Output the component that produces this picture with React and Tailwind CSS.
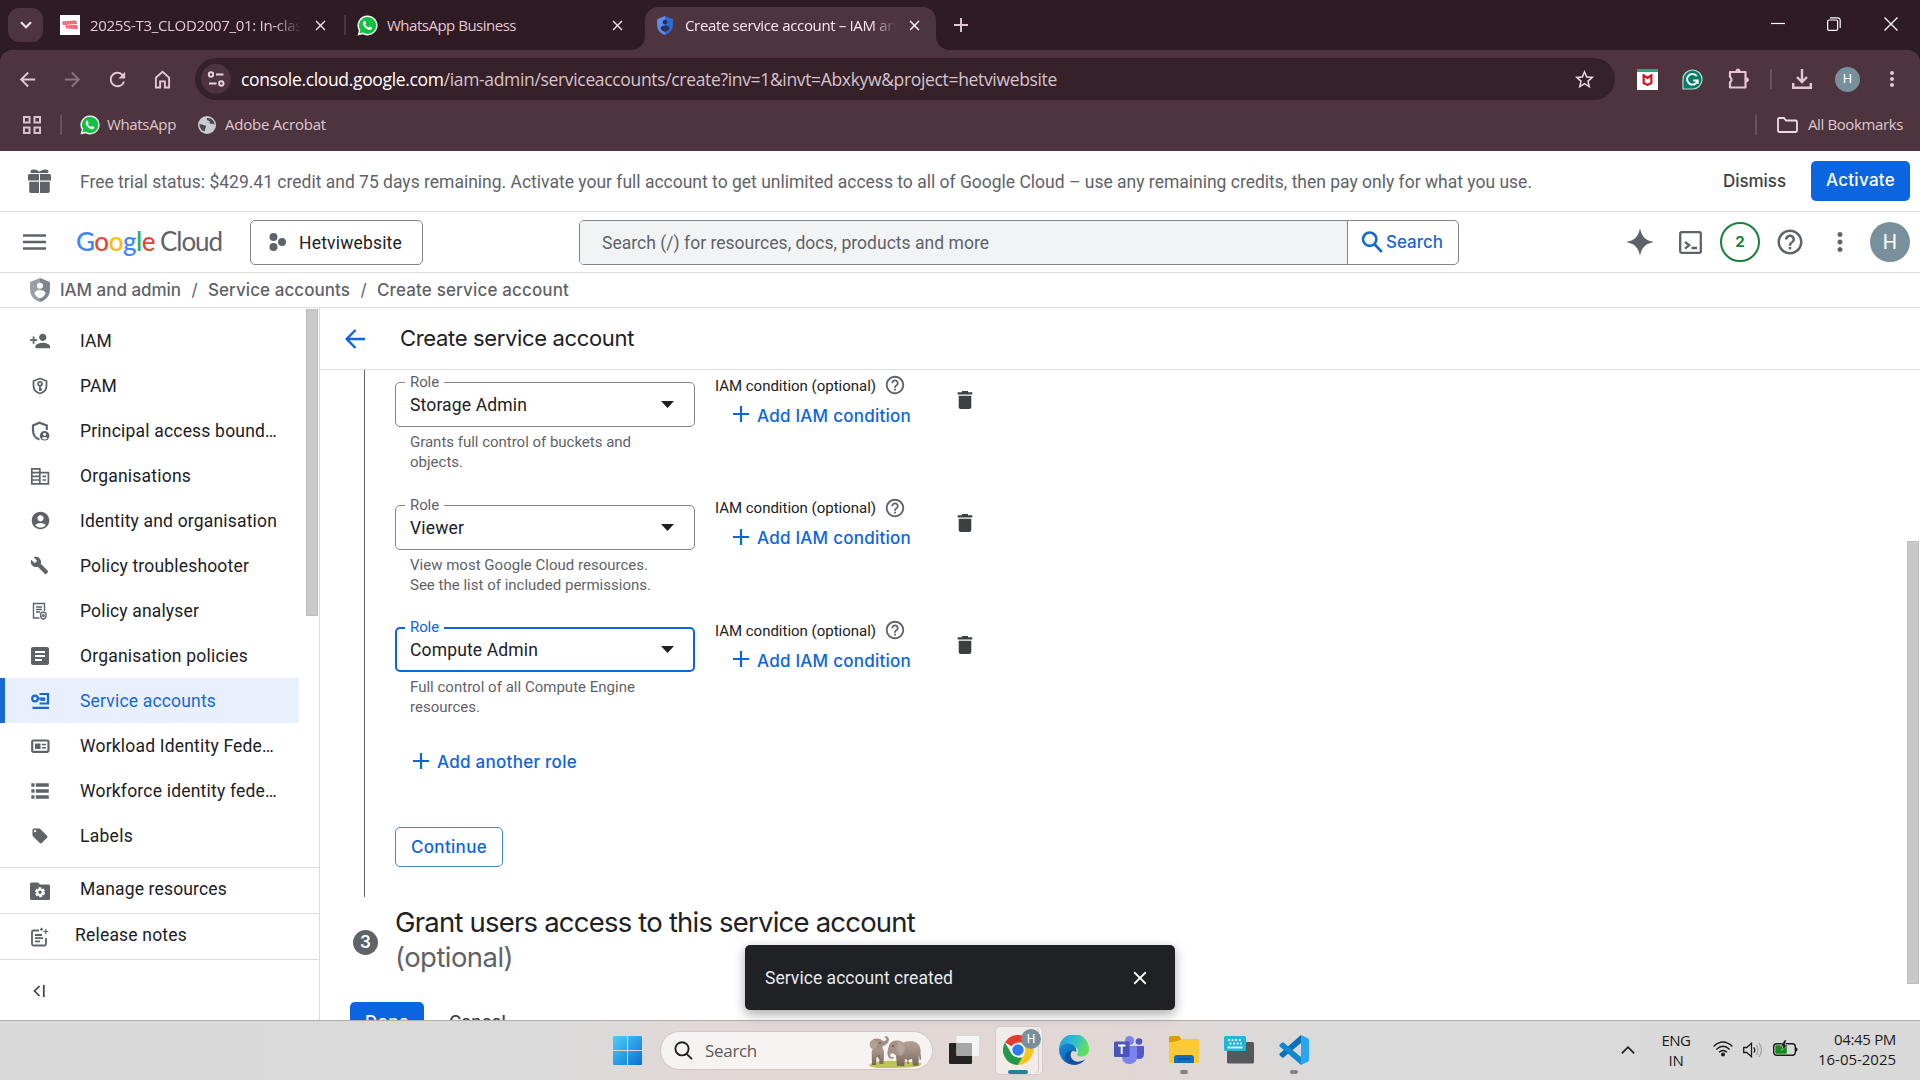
import React, { useLayoutEffect, useRef } from "react";
import {
  MdPersonAdd, MdAccountCircle, MdBuild, MdArticle, MdLocalOffer, MdHelpOutline,
  MdArrowBack, MdArrowForward, MdRefresh, MdClose, MdMoreVert, MdStarBorder,
} from "react-icons/md";

const UI = "font-['Open_Sans','Noto_Sans',sans-serif]";
const RB = "font-[Roboto,sans-serif]";
const GS = "font-[Inter,Roboto,sans-serif]";

/* Text whose tracking is adjusted so that it spans exactly `w` pixels. */
function Fit({ w, className = "", children }) {
  const ref = useRef(null);
  useLayoutEffect(() => {
    const el = ref.current;
    el.style.letterSpacing = "0px";
    const natural = el.getBoundingClientRect().width;
    el.style.letterSpacing = `${(w - natural) / el.textContent.length}px`;
  }, [w, children]);
  return (
    <span ref={ref} className={`inline-block shrink-0 whitespace-pre ${className}`}>
      {children}
    </span>
  );
}

function WhatsApp({ className }) {
  return (
    <svg viewBox="0 0 24 24" className={className}>
      <path d="M12 .5A11.4 11.4 0 0 0 2.2 17.7L.6 23.5l6-1.6A11.4 11.4 0 1 0 12 .5z" fill="#fff" />
      <path d="M12 2.2a9.7 9.7 0 0 0-8.2 14.9l-1 3.9 4.1-1A9.7 9.7 0 1 0 12 2.2z" fill="#12c143" />
      <path d="M8.7 6.6c.4 0 .6.1.8.6l.8 2c.1.3 0 .5-.9 1.6.8 1.6 2.1 2.9 3.9 3.6.9-1 1.1-1.3 1.5-1.1l2 1c.4.2.4.4.3.9-.3 1.3-1.5 1.9-2.5 1.9-1.3 0-4.2-1.200-6-3.600C7.500 12.300 7 11.200 6.900 9.900c0-1.500.8-3.300 1.800-3.300z" fill="#fff" />
    </svg>
  );
}

function Bars() {
  return (
    <svg viewBox="0 0 20 20" className="w-5 h-5" fill="none" stroke="#e8d3da" strokeWidth="1.9">
      <circle cx="5" cy="5.500" r="2.200" /><path d="M10 5.500h7.500M3 14.500h7.500" /><circle cx="15.300" cy="14.500" r="2.200" />
    </svg>
  );
}

function Shield({ className, a, b, hole }) {
  return (
    <svg viewBox="0 0 20 24" className={className}>
      <path d="M10 0L0 4v7.500C0 17.500 4.300 22.500 10 24z" fill={a} />
      <path d="M10 0l10 4v7.500C20 17.500 15.700 22.500 10 24z" fill={b} />
      <circle cx="10" cy="7.800" r="3" fill={hole} />
      <path d="M10 12c3.400 0 5.500 1.700 5.500 3.400C14.500 18 12 20 10 20s-4.500-2-5.500-4.600C4.500 13.700 6.600 12 10 12z" fill={hole} />
    </svg>
  );
}

function TabStrip() {
  return (
    <div className="flex h-[50px] items-start text-[#e6c6d1]">
      <div className="mt-2 ml-2 flex h-[34px] w-[35px] items-center justify-center rounded-[11px] bg-[#4d343e]">
        <svg viewBox="0 0 12 8" className="h-2 w-3" fill="none" stroke="#f0dfe5" strokeWidth="2.200"><path d="M1 1.200l5 5 5-5" /></svg>
      </div>
      <div className="flex h-[50px] w-[301px] items-center pl-[17px]">
        <svg viewBox="0 0 20 20" className="h-5 w-5">
          <path d="M0 0h20v20H0z" fill="#fff" />
          <path d="M2 6.500l14-1 1 3.500-14 1zM5 10.500l12-.5.500 4-11-.5z" fill="#f2566b" />
          <path d="M3.500 8h12M7 12.200h9" stroke="#fbd0d6" strokeWidth=".8" strokeDasharray="1.500 1" />
        </svg>
        <div className={`${UI} mb-px ml-[10px] w-[211px] overflow-hidden text-[15px] leading-5 [mask-image:linear-gradient(90deg,#000_185px,transparent_211px)]`}>
          <Fit w={212}>2025S-T3_CLOD2007_01: In-clas</Fit>
        </div>
        <MdClose className="ml-[11px] h-[17px] w-[17px] shrink-0 text-[#f0dfe5]" />
      </div>
      <div className="mt-[15px] h-5 w-[2px] bg-[#4d343e]" />
      <div className="flex h-[50px] w-[285px] items-center pl-[11px]">
        <WhatsApp className="h-[21px] w-[21px]" />
        <Fit w={129} className={`${UI} mb-px ml-[9px] text-[15px] leading-5`}>WhatsApp Business</Fit>
        <MdClose className="ml-[93px] h-[17px] w-[17px] shrink-0 text-[#f0dfe5]" />
      </div>
      <div className="flex h-[50px] w-[16px] items-end">
        <svg viewBox="0 0 14 14" className="h-[14px] w-[14px]" fill="#4d343e"><path d="M14 0v14H0A14 14 0 0 0 14 0z" /></svg>
      </div>
      <div className="mt-[7px] -ml-[2px] flex h-[43px] w-[291px] items-center rounded-t-[13px] bg-[#4d343e] pl-3 pb-[6px]">
        <Shield className="h-[19px] w-4" a="#5b8def" b="#3367d6" hole="#2f2f55" />
        <div className={`${UI} mb-px ml-3 w-[211px] overflow-hidden text-[15px] leading-5 text-[#fbe9ef] [mask-image:linear-gradient(90deg,#000_185px,transparent_211px)]`}>
          <Fit w={211}>Create service account – IAM an</Fit>
        </div>
        <MdClose className="ml-[10px] h-[17px] w-[17px] shrink-0 text-white" />
      </div>
      <div className="flex h-[50px] w-[16px] items-end">
        <svg viewBox="0 0 14 14" className="h-[14px] w-[14px]" fill="#4d343e"><path d="M0 0v14h14A14 14 0 0 1 0 0z" /></svg>
      </div>
      <svg viewBox="0 0 14 14" className="mt-[18px] ml-[2px] h-[14px] w-[14px]" stroke="#e6c6d1" strokeWidth="1.900"><path d="M7 0v14M0 7h14" /></svg>
      <div className="mt-[17px] mr-[22px] ml-auto flex items-center text-white">
        <svg viewBox="0 0 14 14" className="h-[14px] w-[14px]" stroke="#fff" strokeWidth="1.200"><path d="M0 6.500h14" /></svg>
        <svg viewBox="0 0 14 14" className="ml-[42px] h-[14px] w-[14px]" fill="none" stroke="#fff" strokeWidth="1.200"><rect x=".6" y="3" width="10" height="10.400" rx="1.500" /><path d="M3 .8h7.500a2.500 2.500 0 0 1 2.700 2.600V11" /></svg>
        <svg viewBox="0 0 14 14" className="ml-[43px] h-[14px] w-[14px]" stroke="#fff" strokeWidth="1.300"><path d="M.5.5l13 13M13.500.5l-13 13" /></svg>
      </div>
    </div>
  );
}

function Toolbar() {
  return (
    <div className="flex h-[58px] items-center text-[#e6c6d1]">
      <MdArrowBack className="ml-[16px] h-[23px] w-[23px]" />
      <MdArrowForward className="ml-[22px] h-[23px] w-[23px] text-[#8f737e]" />
      <MdRefresh className="ml-[22px] h-[23px] w-[23px]" />
      <svg viewBox="0 0 18 20" className="ml-[25px] h-[19px] w-[17px]" fill="none" stroke="#e6c6d1" strokeWidth="2"><path d="M2 8v10.500h4.500V12h5v6.500H16V8L9 1.800z" /></svg>
      <div className="ml-[24px] flex h-[42px] w-[1420px] items-center rounded-full bg-[#36212a] pl-[6px]">
        <div className="flex h-[30px] w-[30px] items-center justify-center rounded-full bg-[#4d343e]"><Bars /></div>
        <div className={`${UI} ml-[10px] text-[17.5px] leading-6 text-[#d5c3ca]`}>
          <Fit w={816}><span className="text-white">console.cloud.google.com</span>/iam-admin/serviceaccounts/create?inv=1&amp;invt=Abxkyw&amp;project=hetviwebsite</Fit>
        </div>
        <MdStarBorder className="ml-[516px] h-[23px] w-[23px] text-[#e8d8de]" />
      </div>
      <div className="ml-[22px] flex h-[21px] w-[21px] flex-col items-center border-t-[3px] border-[#2ea583] bg-white">
        <svg viewBox="0 0 12 14" className="mt-[2px] h-[12px] w-[11px]" fill="none" stroke="#d0121f" strokeWidth="2.500"><path d="M1.500 1.500v9L6 12.700l4.500-2.200v-9L6 4.500z" /></svg>
      </div>
      <svg viewBox="0 0 22 22" className="ml-[24px] h-[21px] w-[21px]">
        <path d="M11 1a10 10 0 0 1 0 20H1V11A10 10 0 0 1 11 1z" fill="#067d66" stroke="#b9ddd5" strokeWidth="1.200" />
        <path d="M15.500 7.500a5.600 5.600 0 1 0 .9 4.500h-4.500M16.500 15.500V12" fill="none" stroke="#fff" strokeWidth="2" />
      </svg>
      <svg viewBox="0 0 22 22" className="ml-[25px] h-[22px] w-[22px]" fill="none" stroke="#e6c6d1" strokeWidth="2.200" strokeLinejoin="round">
        <path d="M2 4h15.500v15.500H2v-5.200a3 3 0 0 0 0-5.200z" /><path d="M8 3a2 2 0 0 1 4 0zM18.500 9.800a2 2 0 0 1 0 4z" fill="#e6c6d1" strokeWidth="1" />
      </svg>
      <div className="ml-[20px] h-5 w-[2px] bg-[#6c5059]" />
      <svg viewBox="0 0 20 20" className="ml-[20px] h-[20px] w-[20px]" fill="none" stroke="#e6c6d1" strokeWidth="2.400"><path d="M10 0v12.500M5 8l5 5 5-5M1.200 14v4.800h17.600V14" /></svg>
      <div className={`${RB} ml-[23px] flex h-[25px] w-[25px] items-center justify-center rounded-full bg-[#78909c] text-[13px] text-white`}>H</div>
      <MdMoreVert className="ml-[20px] h-[24px] w-[24px]" />
    </div>
  );
}

function Bookmarks() {
  return (
    <div className={`${UI} flex h-[43px] items-start pt-[7px] text-[15px] leading-5 text-[#dfc8d0]`}>
      <svg viewBox="0 0 18 18" className="mt-[1px] ml-[23px] h-[18px] w-[18px]" fill="none" stroke="#d9c3cb" strokeWidth="2"><rect x="1" y="1" width="5.500" height="5.500" /><rect x="11.500" y="1" width="5.500" height="5.500" /><rect x="1" y="11.500" width="5.500" height="5.500" /><rect x="11.500" y="11.500" width="5.500" height="5.500" /></svg>
      <div className="ml-[19px] h-5 w-[2px] bg-[#6c5059]" />
      <WhatsApp className="ml-[18px] h-[20px] w-[20px]" />
      <Fit w={69} className="-mt-px ml-[7px]">WhatsApp</Fit>
      <svg viewBox="0 0 18 18" className="mt-px ml-[22px] h-[18px] w-[18px]"><circle cx="9" cy="9" r="9" fill="#c9cdd2" /><path d="M1.500 8c2 0 3.500 1 5 1.200 1.500.3 2 1.300 1 2.500-.6.800 0 2-1 3.800-3-.8-5.300-4-5-7.500zM9 2c-1 1.500.5 2.500 2 3s0 2 1 2.500 3-.5 4.500 1.500C17 5 13 1.500 9 2z" fill="#4d4a50" /></svg>
      <Fit w={101} className="-mt-px ml-[9px]">Adobe Acrobat</Fit>
      <div className="ml-auto h-5 w-[2px] bg-[#6c5059]" />
      <svg viewBox="0 0 21 16" className="mt-[2px] ml-[20px] h-[16px] w-[21px]" fill="none" stroke="#eadde2" strokeWidth="1.800"><path d="M1 2.500Q1 1 2.500 1H7l2 2.500h9.500Q20 3.500 20 5v8.500q0 1.500-1.500 1.500h-16Q1 15 1 13.500z" /></svg>
      <Fit w={95} className="-mt-px mr-[17px] ml-[10px]">All Bookmarks</Fit>
    </div>
  );
}

function Banner() {
  return (
    <div className="flex h-[61px] items-center border-b border-[#dadce0] bg-white">
      <svg viewBox="0 0 23 24" className="ml-[28px] h-6 w-[23px]" fill="#5f6368"><path d="M2.500 2.800C2.500 1 4 .2 6 .5c2.500.3 4 1.200 5.500 2.300C13 1.700 14.500.8 17 .5c2-.3 3.500.5 3.500 2.300 0 .8-.5 1.200-1 1.200h-16c-.5 0-1-.4-1-1.200zM1.500 5H11v6.500H0v-5Q0 5 1.500 5zM12 5h9.500Q23 5 23 6.500v5H12zM1.200 12.700H11V24H3q-1.800 0-1.800-1.800zM12 12.700h9.800v9.500Q21.800 24 20 24h-8z" /></svg>
      <Fit w={1452} className={`${RB} mt-[2px] ml-[29px] text-[17.5px] leading-6 text-[#5f6368]`}>Free trial status: $429.41 credit and 75 days remaining. Activate your full account to get unlimited access to all of Google Cloud – use any remaining credits, then pay only for what you use.</Fit>
      <Fit w={63} className={`${GS} ml-[191px] text-[17px] leading-6 font-medium text-[#3c4043]`}>Dismiss</Fit>
      <div className={`${GS} ml-[25px] flex h-10 w-[99px] items-center justify-center rounded-[5px] bg-[#0b65e0] text-[17px] font-medium text-white`}><Fit w={69}>Activate</Fit></div>
    </div>
  );
}

function Header() {
  return (
    <div className="flex h-[61px] items-center border-b border-[#dadce0] bg-white">
      <svg viewBox="0 0 23 16" className="ml-[23px] h-4 w-[23px]" stroke="#5f6368" strokeWidth="2.300"><path d="M0 1.500h23M0 8h23M0 14.500h23" /></svg>
      <Fit w={79} className="mb-[3px] ml-[30px] font-[Lato,sans-serif] text-[26px] leading-8 font-medium text-[#4285f4]">
        G<span className="text-[#ea4335]">o</span><span className="text-[#fbbc04]">o</span>g<span className="text-[#34a853]">l</span><span className="text-[#ea4335]">e</span>
      </Fit>
      <Fit w={62} className="mb-[3px] ml-[5px] font-[Lato,sans-serif] text-[26px] leading-8 text-[#5f6368]">Cloud</Fit>
      <div className="ml-[28px] flex h-[45px] w-[173px] items-center rounded-[5px] border border-[#80868b] pl-[18px]">
        <svg viewBox="0 0 17 18" className="h-[18px] w-[17px]" fill="#5f6368"><circle cx="4.500" cy="4" r="4" /><circle cx="4.500" cy="14" r="4" /><circle cx="13" cy="9" r="4" /></svg>
        <Fit w={103} className={`${RB} mt-px ml-[13px] text-[17.5px] leading-6 text-[#202124]`}>Hetviwebsite</Fit>
      </div>
      <div className="ml-[156px] flex h-[45px] w-[880px] overflow-hidden rounded-[5px] border border-[#80868b]">
        <div className="flex w-[768px] items-center border-r border-[#80868b] bg-[#f1f3f4] pl-[22px]">
          <Fit w={387} className={`${RB} mt-px text-[17.5px] leading-6 text-[#5f6368]`}>Search (/) for resources, docs, products and more</Fit>
        </div>
        <svg viewBox="0 0 22 22" className="mt-[10px] ml-[13px] h-[22px] w-[22px]" fill="none" stroke="#1967d2" strokeWidth="2.600"><circle cx="8.700" cy="8.200" r="6.700" /><path d="M13.300 13l7.500 8" /></svg>
        <Fit w={57} className={`${GS} mt-[9px] ml-[3px] text-[17px] leading-6 font-medium text-[#1967d2]`}>Search</Fit>
      </div>
      <svg viewBox="0 0 28 28" className="ml-[167px] h-7 w-7" fill="#5f6368"><path d="M14 0c1.500 8.500 5.500 12.500 14 14-8.500 1.500-12.500 5.500-14 14C12.500 19.500 8.500 15.500 0 14 8.500 12.500 12.500 8.500 14 0z" /></svg>
      <svg viewBox="0 0 23 23" className="ml-[25px] h-[23px] w-[23px]" fill="none" stroke="#5f6368" strokeWidth="2.300"><rect x="1.200" y="1.200" width="20.600" height="20.600" rx="1.500" /><path d="M6 11l4.200 3.300L6 17.600M12.500 17h5.500" /></svg>
      <div className={`${GS} ml-[18px] flex h-10 w-10 items-center justify-center rounded-full border-[2.500px] border-[#188038] text-[15px] font-bold text-[#188038]`}>2</div>
      <MdHelpOutline className="ml-[15px] h-[30px] w-[30px] text-[#5f6368]" />
      <MdMoreVert className="ml-[20px] h-[30px] w-[30px] text-[#5f6368]" />
      <div className={`${RB} ml-[15px] flex h-10 w-10 items-center justify-center rounded-full bg-[#78909c] text-[20px] text-white`}>H</div>
    </div>
  );
}

function Breadcrumb() {
  return (
    <div className={`${GS} flex h-[35px] items-center border-b border-[#dadce0] bg-white text-[17px] leading-6 font-medium text-[#5f6368]`}>
      <Shield className="ml-[30px] h-6 w-5" a="#9aa0a6" b="#80868b" hole="#fff" />
      <Fit w={121} className="ml-[10px]">IAM and admin</Fit>
      <span className="w-[27px] text-center font-normal">/</span>
      <Fit w={142}>Service accounts</Fit>
      <span className="w-[27px] text-center font-normal">/</span>
      <Fit w={192}>Create service account</Fit>
    </div>
  );
}

const PamIcon = (p) => (
  <svg viewBox="0 0 20 20" {...p} fill="none" stroke="currentColor" strokeWidth="1.800"><path d="M10 2.500L3.500 5v4.500c0 3.800 2.700 7 6.500 8 3.800-1 6.500-4.200 6.500-8V5z" /><circle cx="10" cy="7.800" r="2" /><path d="M10 9.800V15M10 13.500h2" /></svg>
);
const BoundaryIcon = (p) => (
  <svg viewBox="0 0 20 20" {...p}><path d="M16.800 9V4.500L9.500 1.800 3 4.500V9c0 4.500 2.500 8.500 6.500 9.500" fill="none" stroke="currentColor" strokeWidth="2.200" /><circle cx="14.600" cy="14.800" r="4.800" fill="currentColor" /><circle cx="14.600" cy="13.200" r="1.500" fill="#fff" /><path d="M11.700 17.300q2.900-2.700 5.800 0-2.900 2.400-5.800 0z" fill="#fff" /></svg>
);
const OrgIcon = (p) => (
  <svg viewBox="0 0 20 20" {...p} fill="none" stroke="currentColor" strokeWidth="1.700"><path d="M1.800 2.800h8v15h-8zM9.800 6.600h8.600v11.200H9.800M1.800 6.600h8M1.800 10.300h8M1.800 14h8M12.500 10.300h3.500M12.500 14h3.500" /></svg>
);
const AnalyserIcon = (p) => (
  <svg viewBox="0 0 20 20" {...p} fill="none" stroke="currentColor" strokeWidth="1.400"><path d="M9.500 17H3.500V2.500h11V10M6 6h6M6 8.500h6M6 11h4" /><path d="M13.300 11l-2.700 1.200v2.300c0 1.800 1.200 3.200 2.700 3.700 1.500-.5 2.700-1.900 2.700-3.700v-2.300z" /><circle cx="13.300" cy="14.500" r=".8" /></svg>
);
const ServiceIcon = (p) => (
  <svg viewBox="0 0 20 20" {...p} fill="none" stroke="currentColor" strokeWidth="2.200"><circle cx="5" cy="7.500" r="2.800" /><path d="M7.800 7.500H15M11.500 7.500v2.500M14 7.500V10M9.500 3h8.500v9.500H9.500M2.500 16.800h16.500" /></svg>
);
const WorkloadIcon = (p) => (
  <svg viewBox="0 0 20 20" {...p}><rect x="2.200" y="4.500" width="16.300" height="11.300" rx="1.200" fill="none" stroke="currentColor" strokeWidth="2.200" /><path d="M5 7.500h5.500V13H5zM11.800 7.700H16v1.600h-4.200zM11.800 11H16v1.600h-4.200z" fill="currentColor" /></svg>
);
const ListIcon = (p) => (
  <svg viewBox="0 0 20 20" {...p} fill="currentColor"><path d="M1.300 2.200h3.200v3.500H1.300zM5.800 2.200h13v3.500h-13zM1.300 8.200h3.200v3.500H1.300zM5.800 8.200h13v3.500h-13zM1.300 14.200h3.200v3.500H1.300zM5.800 14.200h13v3.500h-13z" /></svg>
);
const ManageIcon = (p) => (
  <svg viewBox="0 0 20 20" {...p}><path d="M1.500 1.500H8l2 2h8.500Q20 3.500 20 5v12.500q0 1.500-1.500 1.500h-17Q0 19 0 17.500V3Q0 1.500 1.500 1.500z" fill="currentColor" /><circle cx="10" cy="11.200" r="3.600" fill="none" stroke="#fff" strokeWidth="2.800" strokeDasharray="2.500 1.270" /><circle cx="10" cy="11.200" r="2.700" fill="none" stroke="#fff" strokeWidth="2" /></svg>
);
const NotesIcon = (p) => (
  <svg viewBox="0 0 20 20" {...p} fill="none" stroke="currentColor" strokeWidth="1.800"><path d="M10 3.500H4.500Q3 3.500 3 5v12q0 1.500 1.500 1.500h11Q17 18.500 17 17v-6M6 8h7M6 11.200h8M6 14.400h5" /><path d="M16.800 2v5M14.300 4.500h5M12.500 .8v3M11 2.300h3" strokeWidth="1.200" /></svg>
);

const nav = [
  [MdPersonAdd, "IAM", 32, "w-[22px] h-[22px] -ml-px"],
  [PamIcon, "PAM", 37, "w-5 h-5"],
  [BoundaryIcon, "Principal access bound…", 197, "w-5 h-5"],
  [OrgIcon, "Organisations", 111, "w-5 h-5"],
  [MdAccountCircle, "Identity and organisation", 197, "w-[21px] h-[21px]"],
  [MdBuild, "Policy troubleshooter", 169, "w-[19px] h-[19px]"],
  [AnalyserIcon, "Policy analyser", 119, "w-5 h-5"],
  [MdArticle, "Organisation policies", 168, "w-6 h-6 -ml-[2px]"],
  [ServiceIcon, "Service accounts", 136, "w-5 h-5"],
  [WorkloadIcon, "Workload Identity Fede…", 194, "w-5 h-5"],
  [ListIcon, "Workforce identity fede…", 197, "w-5 h-5"],
  [MdLocalOffer, "Labels", 53, "w-[18px] h-[18px] ml-px"],
];

function Sidebar() {
  return (
    <div className={`${RB} flex h-full w-[320px] shrink-0 flex-col border-r border-[#dadce0] text-[17.5px] leading-6 text-[#202124]`}>
      <div className="flex h-[559px]">
        <div className="w-[299px] pt-[10px]">
          {nav.map(([Icon, label, w, size]) => {
            const on = label === "Service accounts";
            return (
              <div key={label} className={`flex h-[45px] items-center border-l-[5px] ${on ? "border-[#1967d2] bg-[#e8f0fe] text-[#1967d2]" : "border-transparent"}`}>
                <span className={`ml-[25px] flex w-[45px] ${on ? "" : "text-[#5f6368]"}`}><Icon className={size} /></span>
                <span className="ml-[5px]"><Fit w={w}>{label}</Fit></span>
              </div>
            );
          })}
        </div>
        <div className="mt-px ml-[7px] h-[307px] w-[12px] border border-[#bdbdbd] bg-[#c9c9c9]" />
      </div>
      <div className="flex h-[46px] items-center border-t border-[#dadce0]">
        <ManageIcon className="ml-[30px] h-5 w-5 text-[#5f6368]" /><Fit w={147} className="mb-[3px] ml-[30px]">Manage resources</Fit>
      </div>
      <div className="flex h-[46px] items-center border-t border-[#dadce0]">
        <NotesIcon className="ml-[29px] h-5 w-5 text-[#5f6368]" /><Fit w={112} className="mb-[3px] ml-[26px]">Release notes</Fit>
      </div>
      <div className="flex h-[61px] items-center border-t border-[#dadce0] pt-px">
        <svg viewBox="0 0 12 12" className="ml-[33px] h-3 w-3" fill="none" stroke="#3c4043" strokeWidth="1.700"><path d="M6.500 1L1.500 6l5 5M10.800 0v12" /></svg>
      </div>
    </div>
  );
}

function Plus() {
  return <svg viewBox="0 0 16 16" className="h-4 w-4" stroke="#0b65e0" strokeWidth="2.200"><path d="M8 0v16M0 8h16" /></svg>;
}

function Role({ value, vw, help, active }) {
  return (
    <div className="flex h-[122.500px] items-start">
      <div className="mt-3 w-[300px]">
        <div className={`relative flex h-[45px] items-center rounded-[5px] ${active ? "border-2 border-[#0b65e0] pl-[13px]" : "border border-[#80868b] pl-[14px]"}`}>
          <span className={`${RB} absolute bg-white px-[5px] text-[15px] leading-4 ${active ? "-top-[10px] left-[8px] text-[#0b65e0]" : "-top-[9px] left-[9px] text-[#5f6368]"}`}><Fit w={29}>Role</Fit></span>
          <Fit w={vw} className={`${RB} mt-px text-[17.5px] leading-6 text-[#202124]`}>{value}</Fit>
          <svg viewBox="0 0 13 7" className={`ml-auto h-[7px] w-[13px] ${active ? "mr-[19px]" : "mr-5"}`} fill="#202124"><path d="M0 0h13L6.500 7z" /></svg>
        </div>
        <div className={`${RB} mt-[5px] ml-[15px] flex flex-col items-start text-[15px] leading-5 text-[#5f6368]`}>
          {help.map(([t, w]) => <Fit key={t} w={w}>{t}</Fit>)}
        </div>
      </div>
      <div className="mt-[5px] ml-[20px] w-[230px]">
        <div className="flex h-5 items-center">
          <Fit w={161} className={`${RB} mt-px text-[15px] leading-5 text-[#202124]`}>IAM condition (optional)</Fit>
          <MdHelpOutline className="ml-[8px] h-[22px] w-[22px] text-[#5f6368]" />
        </div>
        <div className="mt-[9px] ml-[18px] flex h-5 items-center">
          <Plus />
          <Fit w={154} className={`${GS} mt-[3px] ml-[8px] text-[17px] leading-5 font-medium text-[#0b65e0]`}>Add IAM condition</Fit>
        </div>
      </div>
      <svg viewBox="0 0 16 18" className="mt-[21px] ml-[12px] h-[18px] w-[16px]" fill="#3c4043"><path d="M5 0h6v1.200h4.300v2.300H.7V1.200H5zM1.700 4.800h12.600V16q0 2-2 2H3.700q-2 0-2-2z" /></svg>
    </div>
  );
}

function Main() {
  return (
    <div className="flex min-w-0 flex-1 flex-col">
      <div className="flex h-[62px] shrink-0 items-center border-b border-[#dadce0]">
        <svg viewBox="0 0 20 20" className="ml-[25px] h-5 w-5" fill="none" stroke="#0b65e0" strokeWidth="2.400"><path d="M20 10H1.500M10.500 1L1.700 10l8.800 9" /></svg>
        <Fit w={234} className={`${GS} mb-px ml-[35px] text-[22px] leading-8 text-[#202124]`}>Create service account</Fit>
      </div>
      <div className="flex h-[650px] overflow-hidden">
        <div className="w-[1267px]">
          <div className="ml-[44px] h-[527px] border-l border-[#5f6368] pl-[30px]">
            <Role value="Storage Admin" vw={117} help={[["Grants full control of buckets and", 221], ["objects.", 53]]} />
            <Role value="Viewer" vw={54} help={[["View most Google Cloud resources.", 238], ["See the list of included permissions.", 241]]} />
            <Role value="Compute Admin" vw={128} active help={[["Full control of all Compute Engine", 225], ["resources.", 70]]} />
            <div className="mt-[13px] ml-[18px] flex h-5 items-center">
              <Plus /><Fit w={140} className={`${GS} mt-[2px] ml-[8px] text-[17px] leading-5 font-medium text-[#0b65e0]`}>Add another role</Fit>
            </div>
            <div className={`${GS} mt-[56px] flex h-10 w-[108px] items-center justify-center rounded-[5px] border border-[#4b83d8] text-[17px] font-medium text-[#0b65e0]`}><Fit w={76} className="mt-[2px]">Continue</Fit></div>
          </div>
          <div className="flex h-[105px] items-start pl-[32px] pt-[8px]">
            <div className={`${GS} mt-[25px] ml-px flex h-[25px] w-[25px] items-center justify-center rounded-full bg-[#5f6368] text-[17px] font-semibold text-white`}>3</div>
            <div className={`${GS} ml-[17px] flex flex-col items-start text-[27.5px] leading-[35px] text-[#202124]`}>
              <Fit w={520}>Grant users access to this service account</Fit>
              <Fit w={118} className="text-[#5f6368]">(optional)</Fit>
            </div>
          </div>
          <div className={`${GS} flex pl-[30px] text-[17px] font-medium`}>
            <div className="flex h-10 w-[74px] items-center justify-center rounded-[5px] bg-[#0b65e0] text-white"><Fit w={44} className="mt-[2px]">Done</Fit></div>
            <div className="ml-[25px] flex h-10 items-center text-[#3c4043]"><Fit w={57} className="mt-[2px]">Cancel</Fit></div>
          </div>
        </div>
        <div className="mt-[171px] ml-[320px] h-[443px] w-[12px] border border-[#bdbdbd] bg-[#c9c9c9]" />
      </div>
    </div>
  );
}

function Elephants() {
  return (
    <svg viewBox="0 0 56 34" className="h-[34px] w-[56px]">
      <defs>
        <linearGradient id="el" x1="0" y1="0" x2="0" y2="1"><stop offset="0" stopColor="#b5a497" /><stop offset=".6" stopColor="#948276" /><stop offset="1" stopColor="#776459" /></linearGradient>
      </defs>
      <path d="M2 29Q12 25 28 26t25 2q2 3-8 4T20 33Q-2 33 2 29z" fill="#bcc455" />
      <path d="M4 30l-.3-13Q4 14 6 12l5-2q5 2 5 8l-.5 11h-4l-.5-7-2.500.5L8 30z" fill="url(#el)" />
      <path d="M3 10Q2 4 8 3.500q5-.5 7 2.500 3 .5 3.500-2-.5-2-2.500-1.500Q17 .5 19.500 1.500 22 4 20 7.500q-2 3-5 3.500-2 4-6 4-5-.5-6-5z" fill="#a29085" />
      <ellipse cx="5.500" cy="9.500" rx="3.800" ry="4.500" fill="#b3a093" />
      <path d="M29 31l-1-10Q28 9 38 6.500q9-2 12.500 3Q53 13 52.500 18l.8 6.500-1.500.3-1-5-.3 11h-5.500l-1-7q-3 1.500-7 .5l-.8 7z" fill="url(#el)" />
      <path d="M20 14Q21 6 28 5.500q6-.5 8.500 4 1.500 7-3 11-6 1-8-2-3-1-3.500 2 .5 2 3 1.500l1.500 1q-3 1.500-5.500 0-2.500-3-1-9z" fill="#a39186" />
      <path d="M29 7q7-1 8 5 0 6-4 8.500-4-1-4.500-7z" fill="#b5a296" />
      <path d="M31.500 10q2.500 3 1 7" stroke="#c9aaa0" strokeWidth="1.500" fill="none" />
      <circle cx="12" cy="8" r=".8" fill="#3a302b" /><circle cx="25" cy="11" r=".8" fill="#3a302b" />
      <path d="M40 24v5M11 20v4" stroke="#6c5a50" strokeWidth="1" />
    </svg>
  );
}

function Taskbar() {
  return (
    <div className={`${UI} flex h-[60px] items-start border-t border-[#b0aeae] bg-[linear-gradient(90deg,#d9d9d9_0%,#dadada_28%,#e1d8d6_38%,#e1d7d5_58%,#dadada_70%,#d9d9d9_100%)] text-[#1c1c1c]`}>
      <svg viewBox="0 0 29 29" className="mt-[15px] ml-[613px] h-[29px] w-[29px]">
        <defs><linearGradient id="win" x1="0" y1="0" x2="1" y2="1"><stop offset="0" stopColor="#4fd0fb" /><stop offset="1" stopColor="#0671cf" /></linearGradient></defs>
        <path d="M1 0h13v14H0V1Q0 0 1 0zM15 0h13q1 0 1 1v13H15zM0 15h14v14H1q-1 0-1-1zM15 15h14v13q0 1-1 1H15z" fill="url(#win)" />
      </svg>
      <div className="mt-[10px] ml-[18px] flex h-[39px] w-[273px] items-center overflow-hidden rounded-full border border-[#d0c6c4] bg-[#f6f3f2] pl-[13px]">
        <svg viewBox="0 0 19 19" className="h-[19px] w-[19px]" fill="none" stroke="#222" strokeWidth="1.900"><circle cx="8" cy="7.800" r="6.600" /><path d="M12.600 12.800l5.400 5.400" /></svg>
        <Fit w={52} className="ml-[12px] text-[17px] leading-6 text-[#5a5a5a]">Search</Fit>
        <span className="mt-[3px] ml-[111px]"><Elephants /></span>
      </div>
      <svg viewBox="0 0 30 29" className="mt-[15px] ml-[16px] h-[29px] w-[30px]">
        <rect x="0" y="7" width="23" height="21" rx="1" fill="#232423" /><rect x="7.500" y="0" width="22.500" height="20" rx="1" fill="#f4f4f4" /><rect x="7.500" y="7" width="15.500" height="13" fill="#a6a6a6" />
      </svg>
      <div className="relative mt-[5px] ml-[16px] flex h-[49px] w-[48px] flex-col rounded-[5px] border border-[#d5cccb] bg-[#f1ebea]">
        <div className="flex h-[47px] w-[43px] flex-col items-center rounded-[5px] border-r border-[#d2c8c7] pl-[2px] pt-[8px]">
          <svg viewBox="0 0 30 30" className="h-[30px] w-[30px] shrink-0">
            <circle cx="15" cy="15" r="15" fill="#fff" />
            <path d="M15 15L2 7.500A15 15 0 0 1 28 7.500H15z" fill="#e33b2e" />
            <path d="M15 7.500h13A15 15 0 0 1 15 30l6.500-11.200z" fill="#fcc31e" />
            <path d="M2 7.500l6.500 11.300L15 22.500h4.300L15 30A15 15 0 0 1 2 7.500z" fill="#249a47" />
            <circle cx="15" cy="15" r="7.300" fill="#fff" /><circle cx="15" cy="15" r="5.700" fill="#2d7ce8" />
          </svg>
          <span className="mt-[5px] h-1 w-[20px] shrink-0 rounded-full bg-[#258292]" />
        </div>
        <span className={`${RB} absolute top-[2px] left-[25px] flex h-5 w-5 items-center justify-center rounded-full bg-[#78909c] text-[12px] text-white`}>H</span>
      </div>
      <svg viewBox="0 0 30 30" className="mt-[14px] ml-[16px] h-[30px] w-[30px]">
        <defs>
          <linearGradient id="e1" x1="0" y1="0" x2="1" y2=".4"><stop offset="0" stopColor="#1b9de0" /><stop offset=".6" stopColor="#35c1c9" /><stop offset="1" stopColor="#62e05a" /></linearGradient>
          <linearGradient id="e2" x1="0" y1="0" x2="1" y2="1"><stop offset="0" stopColor="#1690dd" /><stop offset="1" stopColor="#0c4a9c" /></linearGradient>
        </defs>
        <path d="M0 14A15 15 0 0 1 30 14c0 5-3.500 7.500-7.500 7.500-3 0-5-1.200-4-2.500 1.500-2 1-7-4.500-7.500C7 11 3 14 0 14z" fill="url(#e1)" />
        <path d="M0 15C1.500 9 8 7 13 9.500c4 2 5 5 4 7.500-4-3-8 1-5.500 6 2.500 4.500 9 5 14.500 2A15 15 0 0 1 0 15z" fill="url(#e2)" />
        <path d="M13 16c-3 4-1 9 4 10.500 4 .8 8-1 10-3-5 6-12 7.500-17 5-6-4-5-13 3-12.500z" fill="#0e54a5" />
      </svg>
      <svg viewBox="0 0 30 28" className="mt-[15px] ml-[25px] h-7 w-[30px]">
        <circle cx="15.500" cy="4.500" r="4.500" fill="#7b83eb" /><circle cx="25" cy="5.500" r="3.300" fill="#5059c9" />
        <path d="M21 10h8q1 0 1 1v7q0 5-5 5-4 0-5-3z" fill="#5059c9" /><path d="M9 10h13q1 0 1 1v9q0 8-7.500 8T8 20z" fill="#7b83eb" />
        <rect x="0" y="5.500" width="15.500" height="15.500" rx="1.500" fill="#4b53bc" /><path d="M4 9.500h7.500M7.700 9.500V18" stroke="#fff" strokeWidth="1.900" />
      </svg>
      <div className="ml-[25px] flex w-[30px] flex-col items-center pt-[15px]">
        <svg viewBox="0 0 30 28" className="h-7 w-[30px]">
          <path d="M0 2Q0 0 2 0h8l3 4-2 5H0z" fill="#d99a0b" /><path d="M0 6q8 0 13-3h17v22q0 2-2 2H2q-2 0-2-2z" fill="#fdc935" />
          <path d="M5 27v-5q0-3 3-3h14q3 0 3 3v5z" fill="#0f6fc5" /><path d="M9 23h12" stroke="#0a4f96" strokeWidth="1.500" />
        </svg>
        <span className="mt-[6px] h-1 w-2 rounded-full bg-[#858181]" />
      </div>
      <svg viewBox="0 0 30 28" className="mt-[15px] ml-[25px] h-7 w-[30px]">
        <rect x="3" y="6" width="27" height="21.500" rx="1.500" fill="#55585c" /><rect x="0" y="0" width="22" height="15" rx="1.500" fill="#1fb7d8" />
        <path d="M4 4h14M5.500 7.500h12" stroke="#fff" strokeWidth="1.800" strokeDasharray="1.800 1.800" /><path d="M3.500 11.500h15" stroke="#fff" strokeWidth="1.800" />
      </svg>
      <div className="ml-[25px] flex w-[30px] flex-col items-center pt-[14px]">
        <svg viewBox="0 0 30 30" className="h-[30px] w-[30px]">
          <path d="M22 0v8L4.500 22.500Q3.500 23 2.500 22L.8 20.500q-1-1 0-2z" fill="#0a70b8" />
          <path d="M22 30v-8L4.500 7.500Q3.500 7 2.500 8L.8 9.500q-1 1 0 2z" fill="#1286cf" />
          <path d="M22 0l6.500 3Q30 3.800 30 5.500v19q0 1.700-1.500 2.500L22 30z" fill="#2aa5ee" />
        </svg>
        <span className="mt-[5px] h-1 w-2 rounded-full bg-[#858181]" />
      </div>
      <svg viewBox="0 0 14 8" className="mt-[25px] ml-[312px] h-2 w-[14px]" fill="none" stroke="#1c1c1c" strokeWidth="1.700"><path d="M.8 7.300L7 1.200l6.200 6.100" /></svg>
      <div className="mt-[9px] ml-[26px] flex w-[30px] flex-col items-center text-[15px] leading-5"><Fit w={29}>ENG</Fit><Fit w={15}>IN</Fit></div>
      <svg viewBox="0 0 20 16" className="mt-[20px] ml-[22px] h-4 w-5" fill="none" stroke="#1c1c1c" strokeWidth="1.400"><path d="M.6 5.500q9.400-8.800 18.800 0M3.300 8.500q6.700-6.300 13.400 0M6 11.300q4-3.800 8 0" /><circle cx="10" cy="13.600" r="1.300" fill="#1c1c1c" /></svg>
      <svg viewBox="0 0 20 16" className="mt-[21px] ml-[10px] h-4 w-5" fill="none" stroke="#1c1c1c" strokeWidth="1.300"><path d="M.7 5.500h3L8.500 1.300v13.400L3.700 10.500h-3zM10.800 5.300q2 2.700 0 5.400" /><path d="M13.300 3.200q3.500 4.800 0 9.600M16 1q5 7 0 14" stroke="#a5a5a5" /></svg>
      <svg viewBox="0 0 25 16" className="mt-[19px] ml-[10px] h-4 w-[25px]"><rect x=".7" y="3.700" width="21.600" height="11.600" rx="3" fill="none" stroke="#1c1c1c" strokeWidth="1.400" /><path d="M23 7.500q1.500 0 1.500 2t-1.500 2z" fill="#1c1c1c" /><rect x="2.300" y="5.300" width="11.500" height="8.400" rx="1" fill="#148c14" /><path d="M11.500 0L7.500 6H10L8.500 10.500 15 5h-3l1.500-5z" fill="#1c1c1c" stroke="#d9d9d9" strokeWidth=".6" /></svg>
      <div className="mt-[8px] ml-[20px] flex w-[78px] flex-col items-end text-[15px] leading-5"><Fit w={62}>04:45 PM</Fit><Fit w={78}>16-05-2025</Fit></div>
    </div>
  );
}

export default function App() {
  return (
    <div className="relative flex h-[1080px] w-[1920px] flex-col overflow-hidden bg-[#2f1b23]">
      <TabStrip />
      <div className="h-[101px] rounded-t-[12px] bg-[#4d343e]">
        <Toolbar />
        <Bookmarks />
      </div>
      <Banner />
      <Header />
      <Breadcrumb />
      <div className="flex h-[712px] bg-white">
        <Sidebar />
        <Main />
      </div>
      <Taskbar />
      <div className="absolute top-[945px] left-[745px] flex h-[65px] w-[430px] items-center rounded-[5px] bg-[#202124] pl-5 shadow-[0_4px_12px_rgba(0,0,0,0.35)]">
        <Fit w={188} className={`${RB} text-[17.5px] leading-6 text-[#e8eaed]`}>Service account created</Fit>
        <MdClose className="ml-[176px] h-[22px] w-[22px] text-white" />
      </div>
    </div>
  );
}
